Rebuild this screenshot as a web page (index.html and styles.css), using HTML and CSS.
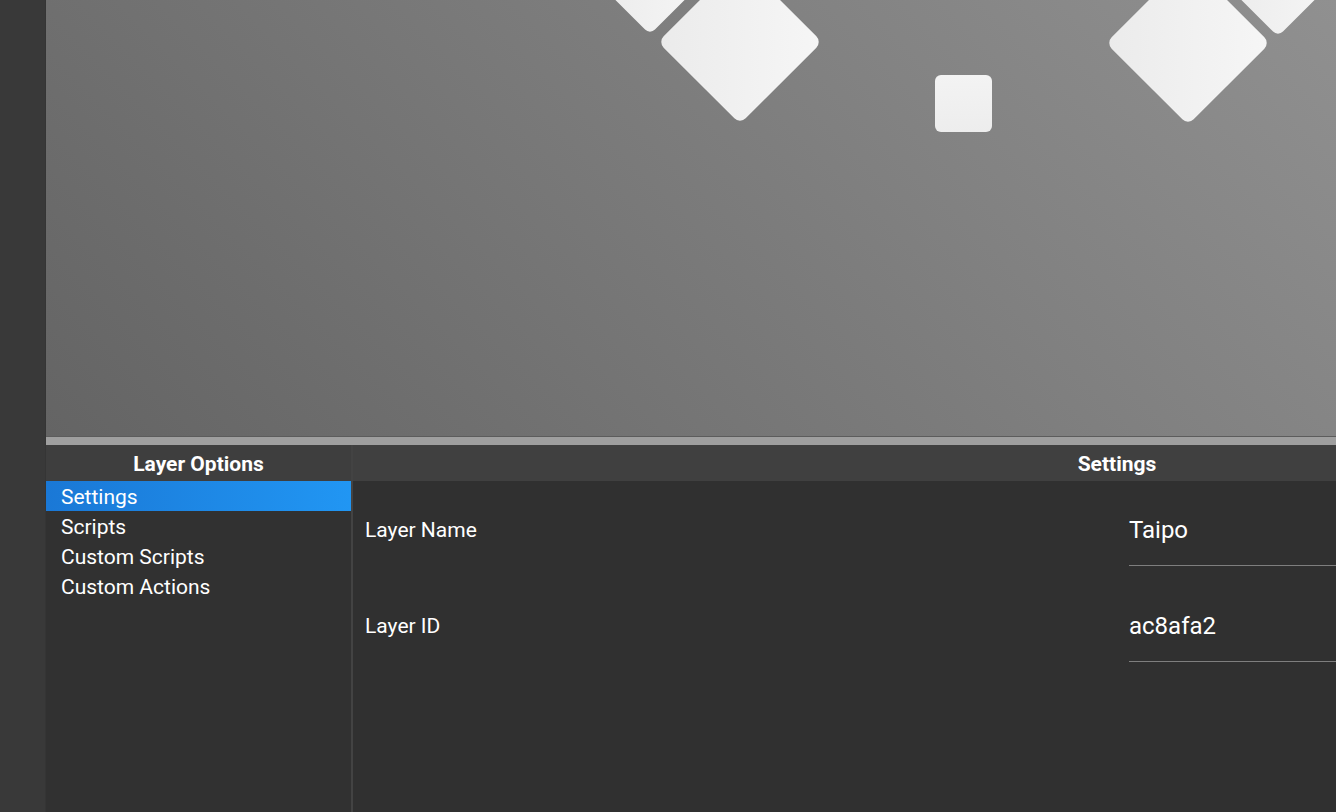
FILE: index.html
```html
<!DOCTYPE html>
<html>
<head>
<meta charset="utf-8">
<link rel="stylesheet" href="styles.css">
</head>
<body>
<div class="app">
  <aside class="sidebar"></aside>
  <main class="main">
    <section class="canvas">
      <div class="shape diamond small" style="left:564px;top:-62px"></div>
      <div class="shape diamond big" style="left:636px;top:-16px"></div>
      <div class="shape square" style="left:889px;top:75px"></div>
      <div class="shape diamond big" style="left:1084px;top:-15px"></div>
      <div class="shape diamond small" style="left:1192px;top:-60px"></div>
    </section>
    <div class="splitter"></div>
    <section class="panel">
      <div class="options">
        <div class="head">Layer Options</div>
        <ul class="list">
          <li class="item selected">Settings</li>
          <li class="item">Scripts</li>
          <li class="item">Custom Scripts</li>
          <li class="item">Custom Actions</li>
        </ul>
      </div>
      <div class="settings">
        <div class="head">Settings</div>
        <div class="grid">
          <div class="label">Layer Name</div>
          <div class="value"><div class="field">Taipo</div></div>
          <div class="label">Layer ID</div>
          <div class="value"><div class="field">ac8afa2</div></div>
        </div>
      </div>
    </section>
  </main>
</div>
</body>
</html>
```
FILE: styles.css
```css
* { box-sizing: border-box; }
html, body { margin: 0; padding: 0; }
body {
  width: 1336px;
  height: 812px;
  overflow: hidden;
  font-family: Roboto, "Liberation Sans", sans-serif;
  color: #fff;
  background: #313131;
}
.app { display: flex; width: 1336px; height: 812px; }
.sidebar {
  width: 46px;
  flex: none;
  background: #393939;
  border-right: 1px solid #353535;
}
.main {
  flex: 1;
  display: flex;
  flex-direction: column;
  min-width: 0;
  overflow: hidden;
}
.canvas {
  position: relative;
  height: 437px;
  flex: none;
  overflow: hidden;
  background: linear-gradient(45deg, #646464 0%, #909090 100%);
  border-bottom: 1px solid #5c5c5c;
}
.shape {
  position: absolute;
  background: linear-gradient(to top right, #ebebeb, #f6f6f6);
}
.diamond { transform: rotate(45deg); border-radius: 8px; }
.diamond.big { width: 116px; height: 116px; }
.diamond.small { width: 80px; height: 80px; border-radius: 7px; }
.square { width: 57px; height: 57px; border-radius: 6px; background: linear-gradient(to bottom, #f3f3f3, #ededed); }
.splitter {
  height: 8px;
  flex: none;
  background: #9f9f9f;
}
.panel {
  flex: 1;
  display: flex;
  min-height: 0;
}
.options {
  width: 307px;
  flex: none;
  background: #313131;
  border-right: 2px solid #434343;
}
.head {
  height: 36px;
  padding-top: 2px;
  display: flex;
  align-items: center;
  justify-content: center;
  font-weight: 700;
  font-size: 21px;
  background: #3e3e3e;
}
.list { list-style: none; margin: 0; padding: 0; }
.item {
  height: 30px;
  line-height: 30px;
  padding-top: 1px;
  padding-left: 15px;
  font-size: 21px;
}
.item.selected {
  background: linear-gradient(to right, #1a78d6, #2196f3);
}
.settings {
  width: 1528px;
  flex: none;
  background: #303030;
}
.settings .head { background: #404040; }
.grid {
  display: grid;
  grid-template-columns: 764px 764px;
  grid-auto-rows: 96px;
}
.label {
  display: flex;
  align-items: center;
  padding-left: 12px;
  padding-top: 2px;
  font-size: 21px;
}
.value { padding: 13px 0 11px 12px; }
.field {
  height: 72px;
  display: flex;
  align-items: center;
  font-size: 24px;
  border-bottom: 1px solid #7e7e7e;
}
```
